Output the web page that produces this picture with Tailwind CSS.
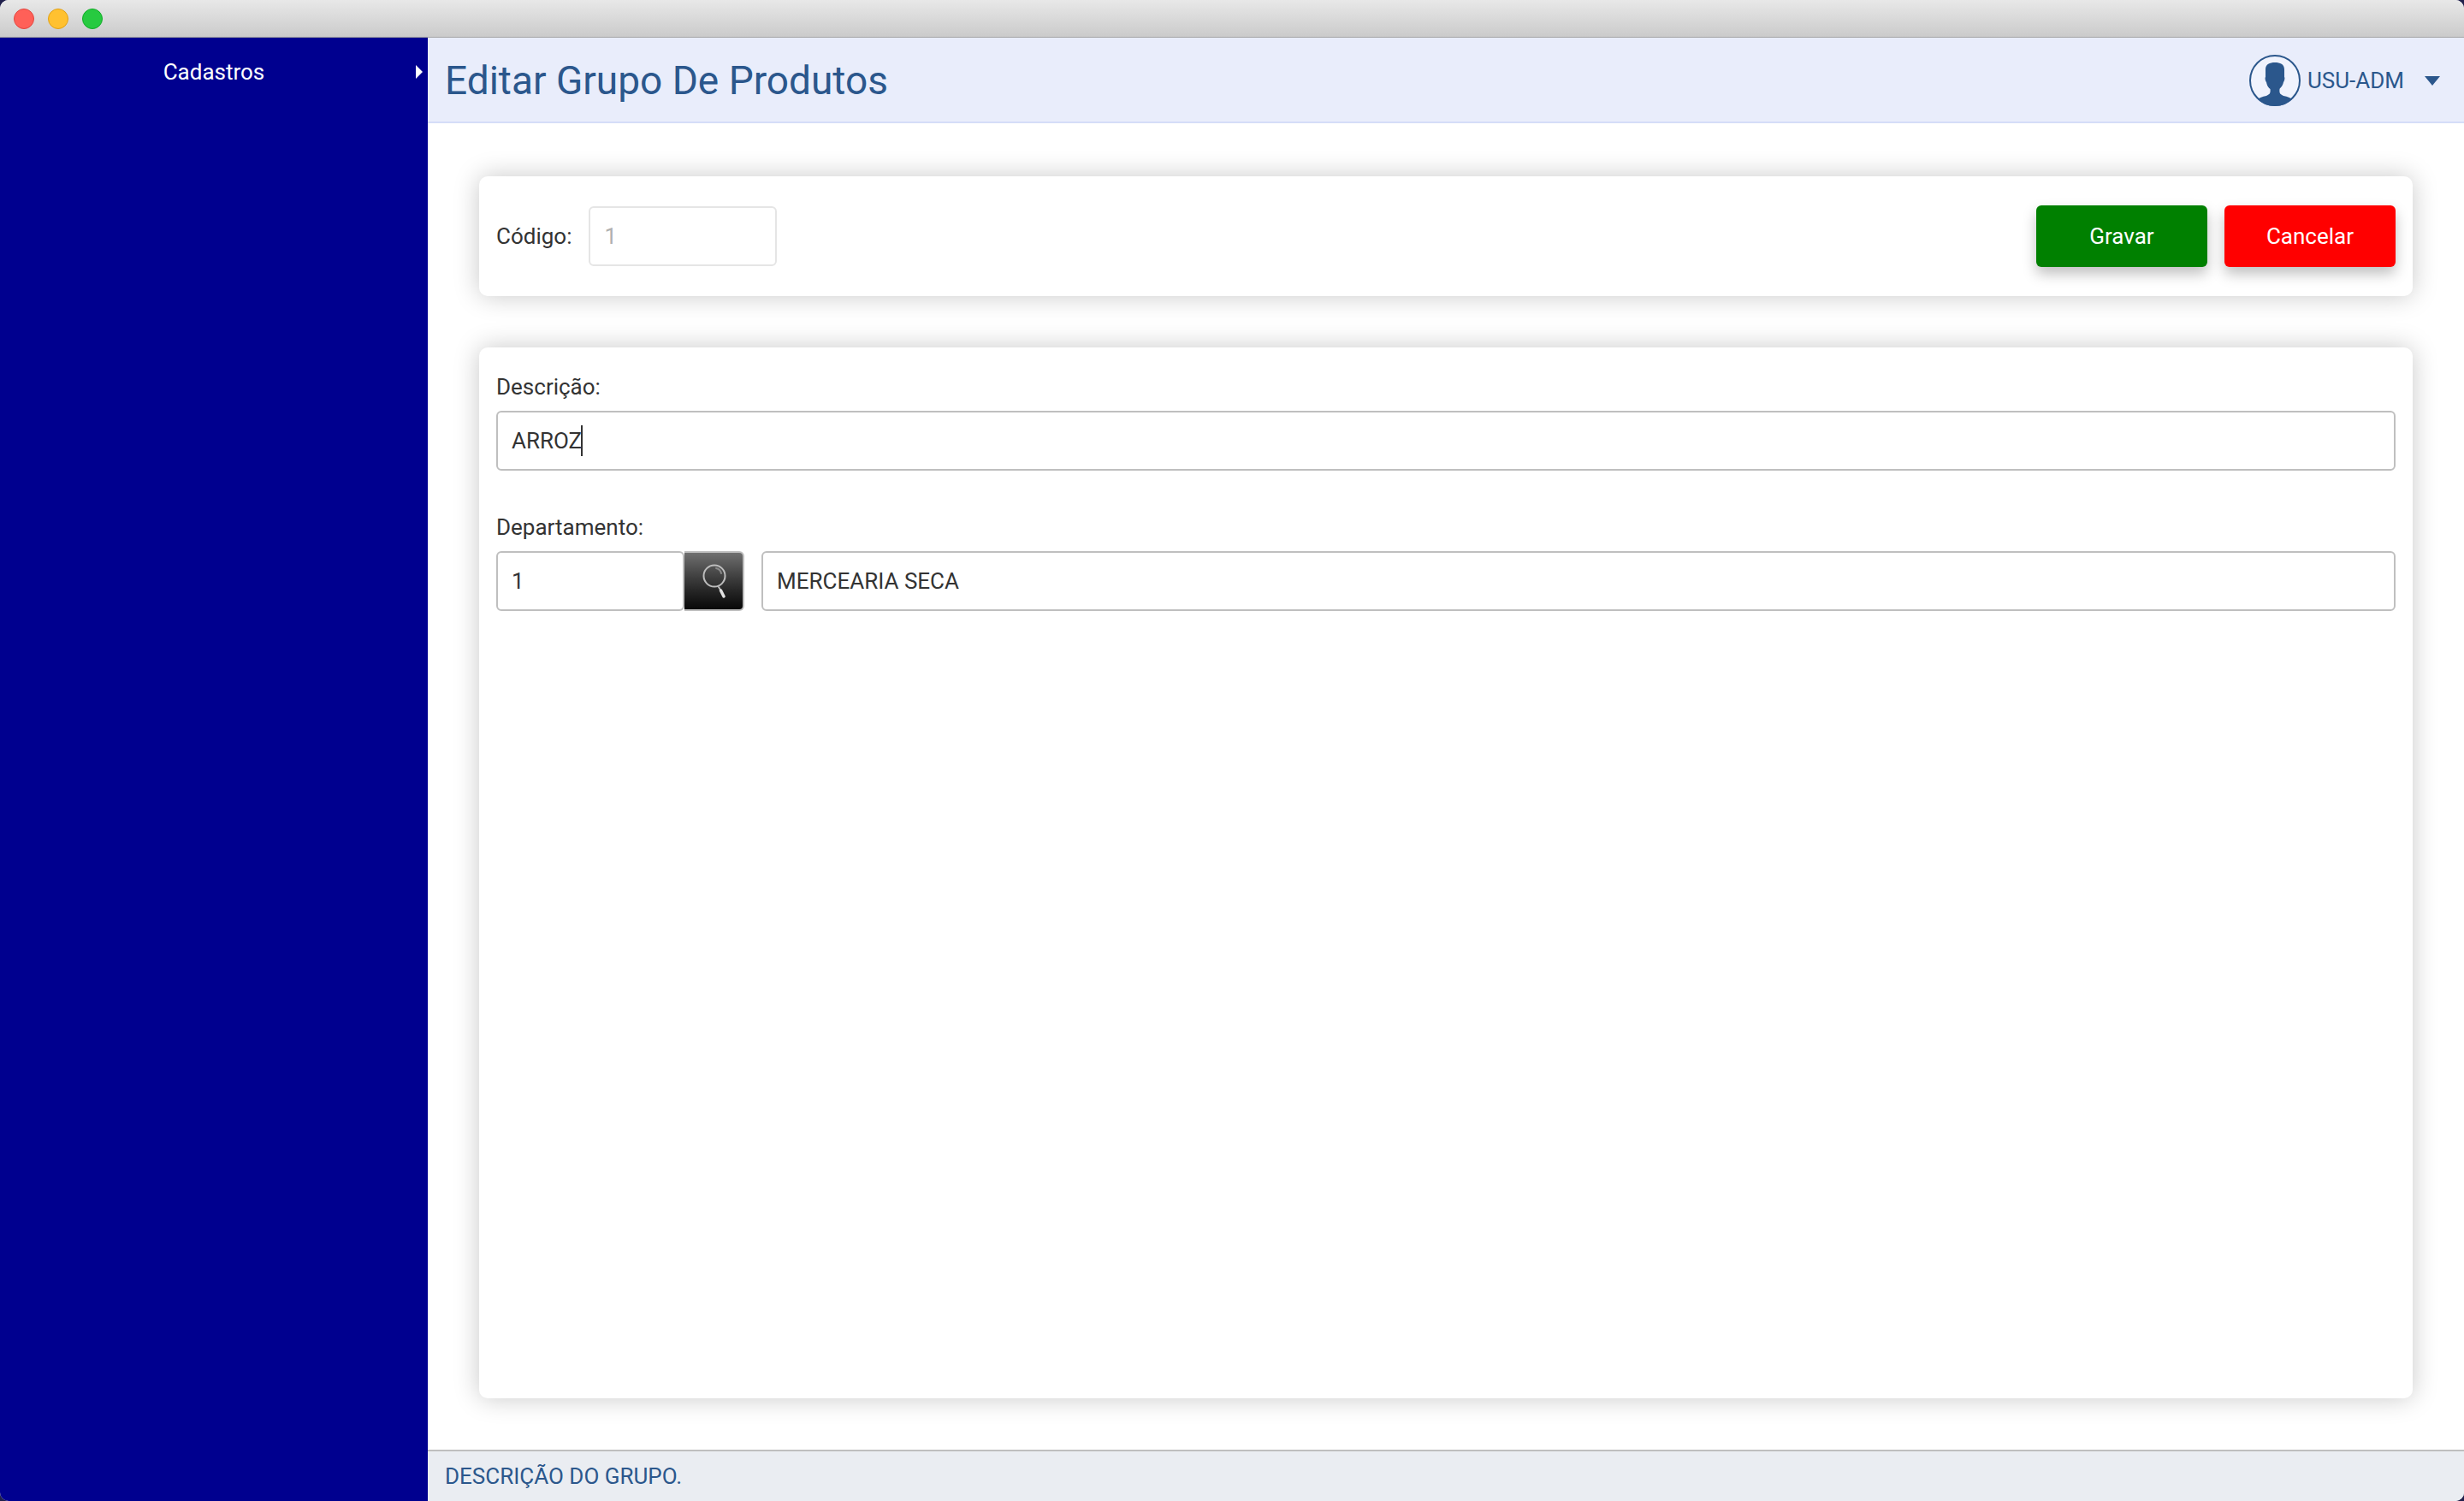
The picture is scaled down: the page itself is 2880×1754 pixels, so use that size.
<!DOCTYPE html>
<html lang="pt-BR">
<head>
<meta charset="utf-8">
<title>Editar Grupo De Produtos</title>
<script src="https://cdn.jsdelivr.net/npm/@tailwindcss/browser@4"></script>
</head>
<body class="bg-[#20204c] font-[Roboto,sans-serif] text-[26px] leading-8 text-[#333333]">
<div class="flex h-screen flex-col overflow-hidden rounded-[10px] bg-white">
  <header class="flex h-11 shrink-0 items-center gap-4 border-b border-[#a3a3a3] bg-linear-to-b from-[#e8e8e8] to-[#cbcbcb] px-4">
    <button aria-label="Fechar" class="size-6 rounded-full border border-[#e2463f] bg-[#ff6058]"></button>
    <button aria-label="Minimizar" class="size-6 rounded-full border border-[#e1a116] bg-[#ffc130]"></button>
    <button aria-label="Maximizar" class="size-6 rounded-full border border-[#12ac28] bg-[#27ca40]"></button>
  </header>
  <div class="flex min-h-0 flex-1">
    <nav class="w-[500px] shrink-0 bg-[#00008f]">
      <button class="relative h-20 w-full text-center text-white">
        Cadastros
        <svg class="absolute top-8 right-1.5 h-4 w-2" viewBox="0 0 8 16" fill="currentColor"><path d="M0 0L8 8L0 16Z"/></svg>
      </button>
    </nav>
    <div class="flex min-w-0 flex-1 flex-col">
      <div class="flex h-[100px] shrink-0 items-center justify-between border-b-2 border-[#d5ddf8] bg-[#e9edfb] pt-0.5 pr-7 pl-5 text-[#2b578c]">
        <h1 class="text-[46px] leading-14">Editar Grupo De Produtos</h1>
        <button class="flex items-center gap-2">
          <svg class="size-15" viewBox="0 0 60 60">
            <circle cx="30" cy="30" r="29" fill="#f0f3fd" stroke="#2b578c" stroke-width="2"/>
            <path fill="#2b578c" d="M30 9C36 9 41 11 41 17L41 26C42 27 41 31 40 32C39 37 36 39 35.500 40C35 45 36 46 40 48C45 49 48 50 50 52C45 57 38 60 30 60C22 60 15 57 10 52C12 50 15 49 20 48C24 46 25 45 24.500 40C23 39 21 37 20 32C19 31 18 27 19 26L19 17C19 11 24 9 30 9Z"/>
          </svg>
          <span>USU-ADM</span>
          <svg class="ml-4 h-[11px] w-[18px]" viewBox="0 0 18 11" fill="currentColor"><path d="M0 0H18L9 11Z"/></svg>
        </button>
      </div>
      <form class="flex min-h-0 flex-1 flex-col gap-15 px-15 pt-[62px] pb-15">
        <section class="flex h-[140px] shrink-0 items-center justify-between rounded-[10px] bg-white px-5 shadow-[0_0_30px_rgba(0,0,0,0.22)]">
          <div class="flex items-center gap-5">
            <label for="codigo">Código:</label>
            <input id="codigo" disabled value="1" class="h-[70px] w-[220px] rounded-md border-2 border-[#e5e5e5] px-4 text-[#b0b0b0]">
          </div>
          <div class="flex gap-5">
            <button type="button" class="h-[72px] w-[200px] rounded-md bg-[#008000] text-white shadow-[0_8px_16px_rgba(0,0,0,0.25)]">Gravar</button>
            <button type="button" class="h-[72px] w-[200px] rounded-md bg-[#ff0000] text-white shadow-[0_8px_16px_rgba(0,0,0,0.25)]">Cancelar</button>
          </div>
        </section>
        <section class="flex flex-1 flex-col gap-[50px] rounded-[10px] bg-white px-5 pt-[30px] shadow-[0_0_30px_rgba(0,0,0,0.22)]">
          <div class="flex flex-col gap-3">
            <label for="descricao">Descrição:</label>
            <div class="relative">
              <input id="descricao" value="ARROZ" class="block h-[70px] w-full rounded-md border-2 border-[#bfbfbf] px-4">
              <span class="absolute top-[17px] left-[99px] h-9 w-0.5 bg-[#333333]"></span>
            </div>
          </div>
          <div class="flex flex-col gap-3">
            <label for="departamento">Departamento:</label>
            <div class="flex">
              <input id="departamento" value="1" class="h-[70px] w-[220px] rounded-md border-2 border-[#bfbfbf] px-4">
              <button type="button" aria-label="Pesquisar" class="mr-5 h-[70px] w-[70px] rounded-r-md border-2 border-l-0 border-[#bfbfbf] bg-linear-to-b from-[#707070] to-[#080808]">
                <svg class="size-full" viewBox="0 0 68 66" fill="none" stroke-linecap="round">
                  <circle cx="35" cy="27" r="12.500" stroke="#bdbdbd" stroke-width="2"/>
                  <path d="M37 18Q42 19 43 24" stroke="#8a8a8a" stroke-width="2"/>
                  <path d="M40 40L42 43" stroke="#bdbdbd" stroke-width="2"/>
                  <path d="M42.500 44L46 51" stroke="#e2e2e2" stroke-width="3.500"/>
                </svg>
              </button>
              <input aria-label="Nome do departamento" value="MERCEARIA SECA" class="h-[70px] min-w-0 flex-1 rounded-md border-2 border-[#bfbfbf] px-4">
            </div>
          </div>
        </section>
      </form>
      <footer class="flex h-[60px] shrink-0 items-center border-t-2 border-[#bfbfbf] bg-[#eaedf2] px-5 text-[#2b578c]">DESCRIÇÃO DO GRUPO.</footer>
    </div>
  </div>
</div>
</body>
</html>
